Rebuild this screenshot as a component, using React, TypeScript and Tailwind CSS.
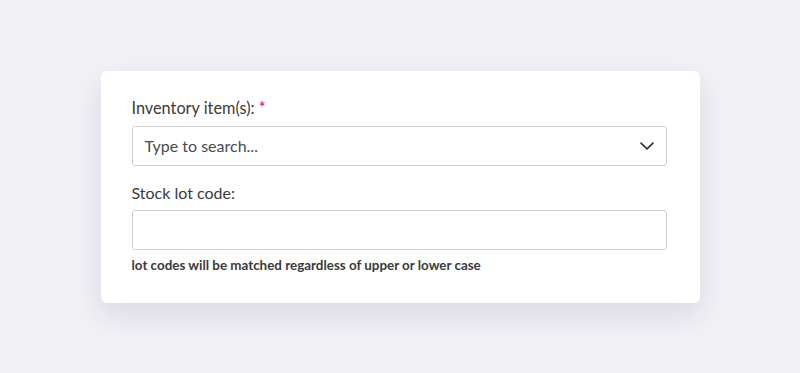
import React from 'react';

export default function App() {
  return (
    <div
      className="flex min-h-[373px] w-full items-center justify-center bg-[#f2f1f6]"
      style={{ fontFamily: 'Lato, "Noto Sans", sans-serif' }}
    >
      <div className="w-[599px] rounded-[6px] bg-white pb-[28px] pl-[31px] pr-[33px] pt-[25px] shadow-[0_12px_30px_rgba(40,40,80,0.12)]">
        {/* Inventory items */}
        <label className="block text-[16.3px] leading-[24px] text-[#3a3a3a]">
          Inventory item(s): <span className="text-[#b5174b]">*</span>
        </label>
        <div className="mt-[6px] flex h-[40px] items-center justify-between rounded-[3px] border border-[#cfcfcf] bg-white pl-[12px] pr-[11px]">
          <span className="text-[16px] text-[#4a4a4a]">Type to search...</span>
          <svg width="16" height="10" viewBox="0 0 16 10" fill="none">
            <path d="M2 2.2 L8 7.8 L14 2.2" stroke="#333" strokeWidth="1.7" strokeLinecap="round" strokeLinejoin="round" />
          </svg>
        </div>

        {/* Stock lot code */}
        <label className="mt-[15px] block text-[16px] leading-[24px] text-[#3a3a3a]">
          Stock lot code:
        </label>
        <input
          type="text"
          className="mt-[5px] block h-[40px] w-full rounded-[3px] border border-[#cfcfcf] bg-white px-[12px] text-[16px] outline-none"
        />
        <p className="mt-[5px] text-[13.4px] font-bold leading-[20px] text-[#3a3a3a]">
          lot codes will be matched regardless of upper or lower case
        </p>
      </div>
    </div>
  );
}
